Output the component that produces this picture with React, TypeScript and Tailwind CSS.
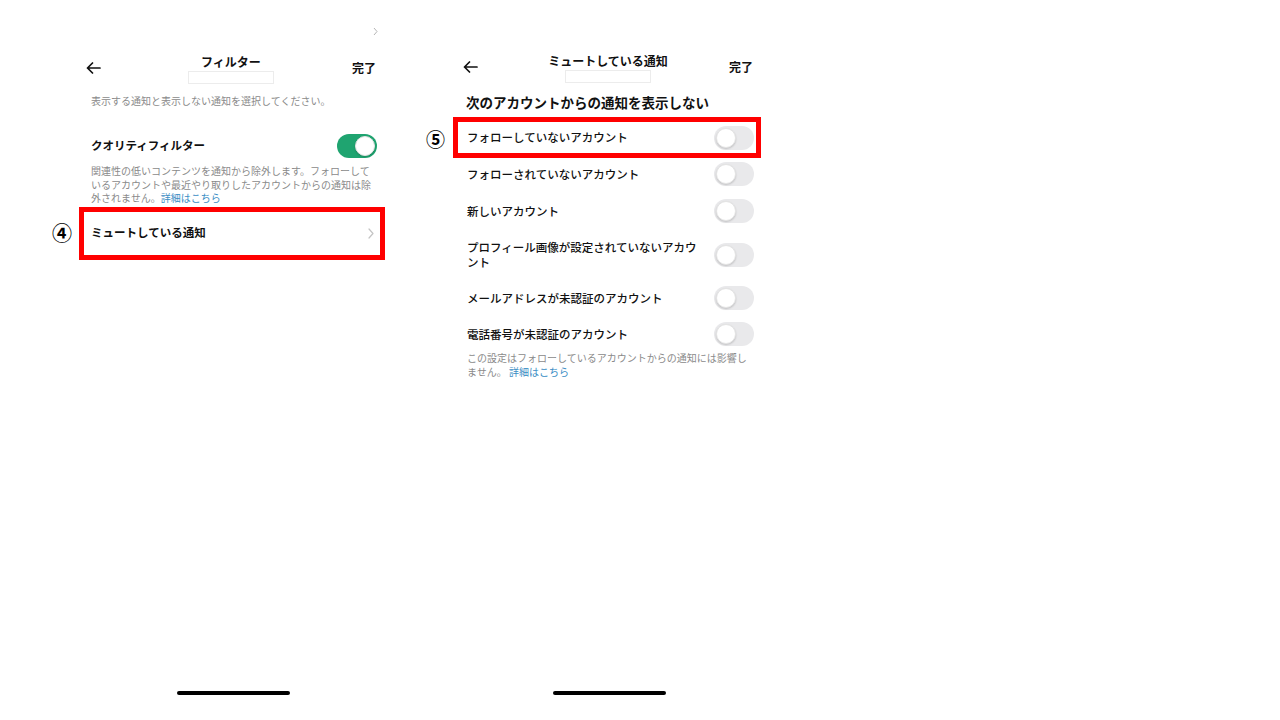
import React from 'react';

const BackArrow: React.FC = () => (
  <svg width="15" height="12" viewBox="0 0 15 12" fill="none" stroke="#111" strokeWidth="1.7" strokeLinecap="round" strokeLinejoin="round">
    <path d="M14 6H1.5M6.5 1L1.5 6l5 5" />
  </svg>
);

const Toggle: React.FC<{ on?: boolean }> = ({ on }) => (
  <div className={`w-[40px] h-[24px] rounded-full flex items-center px-[2px] shrink-0 ${on ? 'bg-[#1fa470] justify-end' : 'bg-[#e9e9eb] justify-start'}`}>
    <div className="w-[20px] h-[20px] rounded-full bg-white shadow-[0_1px_2px_rgba(0,0,0,0.18)] border border-[#e4e4e4]" />
  </div>
);

const NavBar: React.FC<{ title: string }> = ({ title }) => (
  <div className="grid grid-cols-[1fr_auto_1fr] items-center">
    <div className="justify-self-start mb-[3px]"><BackArrow /></div>
    <div className="flex flex-col items-center">
      <div className="text-[12px] leading-[14px] font-bold text-[#111]">{title}</div>
      <div className="mt-[2px] w-[86px] h-[13px] border border-[#ececec]" />
    </div>
    <div className="justify-self-end mb-[3px] text-[12px] font-bold text-[#111]">完了</div>
  </div>
);

const HomeBar: React.FC<{ shift?: string }> = ({ shift = '' }) => (
  <div className={`mt-auto mb-[25px] flex justify-center ${shift}`}>
    <div className="w-[113px] h-[4px] rounded-full bg-black" />
  </div>
);

const muteRows = [
  'フォローされていないアカウント',
  '新しいアカウント',
  'プロフィール画像が設定されていないアカウント',
  'メールアドレスが未認証のアカウント',
  '電話番号が未認証のアカウント',
];
const rowMargins = ['mt-0', 'mt-[5px]', 'mt-[12px]', 'mt-[11px]', 'mt-[4px]'];

export default function App() {
  return (
    <div className="w-[1280px] h-[720px] bg-white flex font-['Noto_Sans_CJK_JP',sans-serif] text-[#111]">
      {/* フィルター */}
      <div className="ml-[79px] w-[306px] h-full flex flex-col pt-[27px]">
        <div className="h-[10px] flex justify-end pr-[7px]">
          <svg width="5" height="9" viewBox="0 0 5 9" fill="none" stroke="#b5b5b5" strokeWidth="1">
            <path d="M1 1l3 3.5L1 8" />
          </svg>
        </div>
        <div className="mt-[18px] pl-[7px] pr-[9px]">
          <NavBar title="フィルター" />
        </div>
        <div className="mt-[10px] pl-[12px] pr-[8px] text-[10px] leading-[14px] text-[#8a8a8a]">
          表示する通知と表示しない通知を選択してください。
        </div>
        <div className="mt-[26px] pl-[12px] pr-[8px] h-[24px] flex items-center justify-between">
          <span className="text-[11.5px] font-bold">クオリティフィルター</span>
          <Toggle on />
        </div>
        <div className="mt-[6px] pl-[12px] pr-[8px] text-[10px] leading-[13.5px] text-[#8a8a8a]">
          関連性の低いコンテンツを通知から除外します。フォローしているアカウントや最近やり取りしたアカウントからの通知は除外されません。<span className="text-[#3a8dc4]">詳細はこちら</span>
        </div>
        <div className="relative mt-[2px] h-[53px] border-[5px] border-[#ff0000] pl-[7px] pr-[6px] flex items-center justify-between">
          <span className="absolute -left-[32px] top-1/2 -translate-y-1/2 text-[20px] leading-none font-bold text-black">④</span>
          <span className="text-[11.5px] font-bold">ミュートしている通知</span>
          <svg width="6" height="11" viewBox="0 0 6 11" fill="none" stroke="#c4c4c4" strokeWidth="1.2" strokeLinecap="round" strokeLinejoin="round">
            <path d="M1 1l4 4.5L1 10" />
          </svg>
        </div>
        <HomeBar shift="pl-[2px]" />
      </div>

      {/* ミュートしている通知 */}
      <div className="ml-[68px] w-[308px] h-full flex flex-col pt-[54px]">
        <div className="pl-[10px] pr-[8px]">
          <NavBar title="ミュートしている通知" />
        </div>
        <div className="mt-[10px] pl-[13px] text-[13.5px] leading-[18px] font-bold">
          次のアカウントからの通知を表示しない
        </div>
        <div className="relative mt-[6px] h-[41px] border-[5px] border-[#ff0000] pl-[9px] pr-[2px] flex items-center justify-between">
          <span className="absolute -left-[32px] top-1/2 -translate-y-1/2 text-[19px] leading-none font-bold text-black">⑤</span>
          <span className="text-[11.5px] font-medium">フォローしていないアカウント</span>
          <Toggle />
        </div>
        {muteRows.map((label, i) => (
          <div key={label} className={`${rowMargins[i]} h-[32px] pl-[14px] pr-[7px] flex items-center justify-between`}>
            <span className="w-[234px] text-[11.5px] leading-[15px] font-medium">{label}</span>
            <Toggle />
          </div>
        ))}
        <div className="mt-[1px] pl-[14px] pr-[7px] text-[10px] leading-[14px] text-[#8a8a8a]">
          この設定はフォローしているアカウントからの通知には影響しません。 <span className="text-[#3a8dc4]">詳細はこちら</span>
        </div>
        <HomeBar shift="pl-[5px]" />
      </div>
    </div>
  );
}
